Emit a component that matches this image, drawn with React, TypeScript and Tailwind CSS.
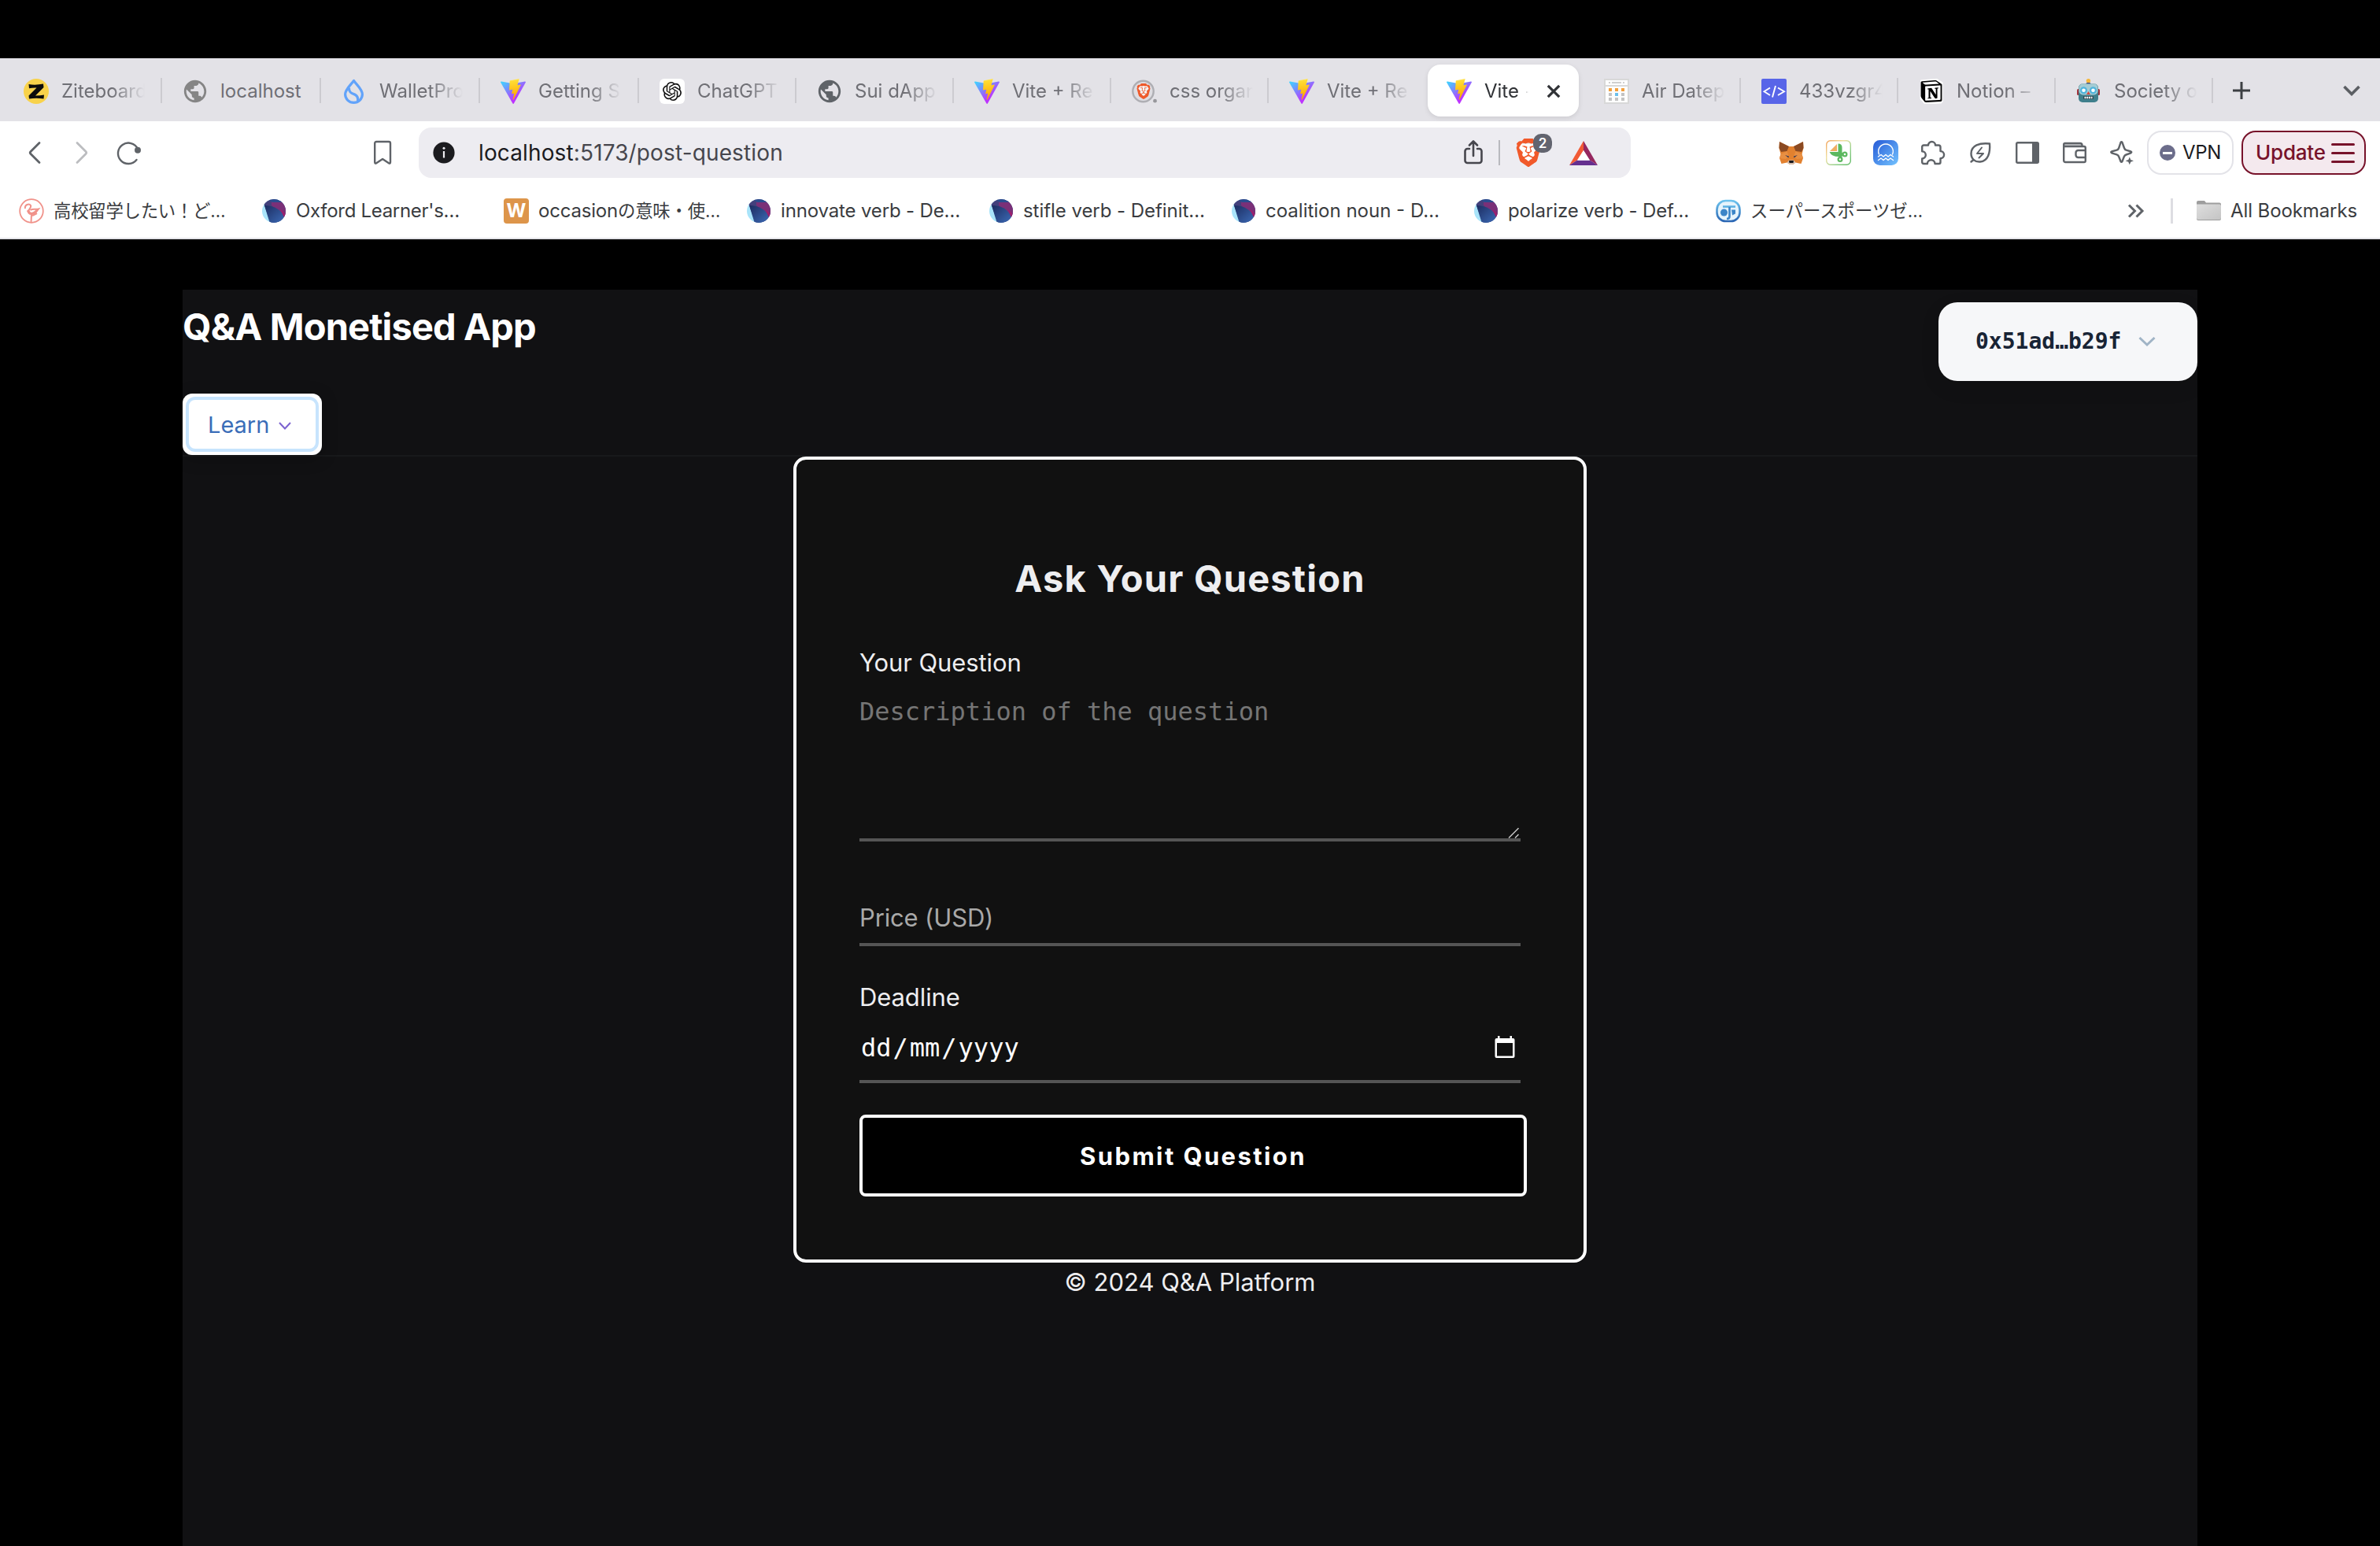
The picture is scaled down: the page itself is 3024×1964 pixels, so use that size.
import type { ReactNode } from "react";
import { SiBrave, SiNotion, SiOpenai } from "react-icons/si";
import { MdPublic } from "react-icons/md";

const Vite = () => (
  <svg viewBox="0 0 256 257" className="size-8">
    <defs>
      <linearGradient id="va" x1="-.8%" x2="57.6%" y1="7.6%" y2="78.4%">
        <stop offset="0%" stopColor="#41D1FF" />
        <stop offset="100%" stopColor="#BD34FE" />
      </linearGradient>
      <linearGradient id="vb" x1="43.4%" x2="50.3%" y1="2.2%" y2="89%">
        <stop offset="0%" stopColor="#FFEA83" />
        <stop offset="8.3%" stopColor="#FFDD35" />
        <stop offset="100%" stopColor="#FFA800" />
      </linearGradient>
    </defs>
    <path
      fill="url(#va)"
      d="M255.153 37.938L134.897 252.976c-2.483 4.44-8.862 4.466-11.382.048L.875 37.958c-2.746-4.814 1.371-10.646 6.827-9.67l120.385 21.517a6.537 6.537 0 0 0 2.322-.004l117.867-21.483c5.438-.991 9.574 4.796 6.877 9.62Z"
    />
    <path
      fill="url(#vb)"
      d="M185.432.063L96.44 17.501a3.268 3.268 0 0 0-2.634 3.014l-5.474 92.456a3.268 3.268 0 0 0 3.997 3.378l24.777-5.718c2.318-.535 4.413 1.507 3.936 3.838l-7.361 36.047c-.495 2.426 1.782 4.5 4.151 3.78l15.304-4.649c2.372-.72 4.652 1.36 4.15 3.788l-11.698 56.621c-.732 3.542 3.979 5.473 5.943 2.437l1.313-2.028l72.516-144.72c1.215-2.423-.88-5.186-3.54-4.672l-25.505 4.922c-2.396.462-4.435-1.77-3.759-4.114l16.646-57.705c.677-2.35-1.37-4.583-3.769-4.113Z"
    />
  </svg>
);

const Zite = () => (
  <svg viewBox="0 0 32 32" className="size-8">
    <circle cx="16" cy="16" r="16" fill="#f8d24b" />
    <path d="M6.5 7 Q15 8.5 25 6.5 L25.5 11 L15 21.5 Q21 21.5 26 20.5 L25.5 25.5 Q16 24 7 25.5 L6.5 21.5 L16.5 11.5 Q11 11.3 7 12.2 Z" fill="#0c0c0c" />
  </svg>
);

const Sui = () => (
  <svg viewBox="0 0 32 32" className="size-8" fill="none" stroke="#62a3fa" strokeWidth="3.2" strokeLinejoin="round">
    <path d="M15.500 2.500 C12.500 7 4.600 13.500 4.600 19.800 a10.900 10.600 0 0 0 21.800 0 C26.400 13.500 18.500 7 15.500 2.500 Z" />
    <path d="M9.500 11.500 C9 18 13.500 18.500 17.500 20.500 C21.500 22.700 21 26 20.500 29" />
  </svg>
);

const ChatGpt = () => (
  <span className="flex size-8 items-center justify-center rounded-md bg-white">
    <SiOpenai size={24} color="#111" />
  </span>
);

const Globe = ({ light }: { light?: boolean }) => (
  <span className="flex size-8 items-center justify-center">
    <MdPublic size={34} color={light ? "#858585" : "#5f6368"} className="shrink-0" />
  </span>
);

const BraveSearch = () => (
  <span className="relative flex size-8 items-center justify-center">
    <svg viewBox="0 0 32 32" className="absolute inset-0 size-8">
      <circle cx="14.500" cy="16" r="13.200" fill="#dedde2" stroke="#aeaeb3" strokeWidth="2.400" />
      <circle cx="29.500" cy="28.200" r="2.400" fill="#97979c" />
      <path d="M8 8 h13 l1 6 -2 8 -5.500 4 -5.500 -4 -2 -8 Z" fill="#f4f4f6" />
    </svg>
    <SiBrave size={20} color="#ee5a2b" className="relative -left-[1.5px]" />
  </span>
);

const Calendar = () => (
  <svg viewBox="0 0 32 32" className="size-8">
    <rect x="1" y="1" width="30" height="30" fill="#fdfdfd" stroke="#d8d8d8" strokeWidth="2" />
    <path d="M1 9 H31" stroke="#d8d8d8" strokeWidth="2" />
    <path d="M6 5 h2 M10 5 h12 M24 5 h2" stroke="#d0d0d0" strokeWidth="2" />
    <path d="M6 14 h4 M14 14 h4 M22 14 h4" stroke="#f4a03c" strokeWidth="4" />
    <path d="M6 20 h4 M22 20 h4 M6 26 h4 M14 26 h4 M22 26 h4" stroke="#c3c3c3" strokeWidth="4" />
    <path d="M14 20 h4" stroke="#6cc0ec" strokeWidth="4" />
  </svg>
);

const Code = () => (
  <svg viewBox="0 0 32 32" className="size-8">
    <rect width="32" height="32" rx="2" fill="#5865e8" />
    <path d="M11 11.500 L3.500 16.300 L11 21 M21 11.500 L29 16.300 L21 21 M18 9 L14 23.500" fill="none" stroke="#fff" strokeWidth="1.900" />
  </svg>
);

const Notion = () => (
  <span className="relative flex size-8 items-center justify-center">
    <svg viewBox="0 0 32 32" className="absolute inset-0 size-8">
      <path d="M3 2.500 L23 1 L29.500 5 V29 L28 30.500 L9 31.500 L7 30.500 L2.500 25 Z" fill="#fff" stroke="#fff" strokeWidth="2" strokeLinejoin="round" />
    </svg>
    <SiNotion size={28} color="#000" className="relative" />
  </span>
);

const Robot = () => (
  <svg viewBox="0 0 32 32" className="size-8">
    <circle cx="15.500" cy="2.800" r="2.700" fill="#f6b73c" />
    <rect x="12.500" y="5" width="6" height="3.500" rx="1.500" fill="#3e4a78" />
    <rect x="1" y="13" width="3.500" height="8" rx="1.500" fill="#a1343c" />
    <rect x="26.500" y="13" width="3.500" height="8" rx="1.500" fill="#a1343c" />
    <rect x="3" y="6.500" width="25" height="23.500" rx="5" fill="#3f7f8c" />
    <rect x="3.500" y="6.500" width="24" height="14" rx="5" fill="#a5ccd4" />
    <circle cx="9.500" cy="14.800" r="4.500" fill="#4fb4dc" />
    <circle cx="21.500" cy="14.800" r="4.500" fill="#4fb4dc" />
    <circle cx="9.500" cy="14.800" r="2.300" fill="#fff" />
    <circle cx="21.500" cy="14.800" r="2.300" fill="#fff" />
    <path d="M15.500 16 l2.500 4 h-5 Z" fill="#d8473d" />
    <rect x="9" y="22" width="13" height="4" rx="1" fill="#2b4650" />
    <path d="M10.500 24 h10" stroke="#fff" strokeWidth="2.500" strokeDasharray="2 0.800" />
  </svg>
);

const stroke = { fill: "none", stroke: "#5f6368", strokeWidth: 2.4, strokeLinecap: "round", strokeLinejoin: "round" } as const;

const Fox = () => (
  <svg viewBox="0 0 32 32" className="size-8">
    <path d="M1 2 L13 8 H19 L31 2 L31.500 10 L29.500 18 L31 23 L28.500 30 L21.500 28.500 L18 31 H14 L10.500 28.500 L3.500 30 L1 23 L2.500 18 L.5 10 Z" fill="#e2812f" />
    <path d="M1 2 L13 8 L10.500 14 L3 15 L.5 10 Z M31 2 L19 8 L21.500 14 L29 15 L31.500 10 Z" fill="#8b4a22" />
    <path d="M2.500 18 L10.500 14 L12.500 20 L9 24 L1 23 Z M29.500 18 L21.500 14 L19.500 20 L23 24 L31 23 Z" fill="#e88f42" />
    <path d="M8 19 l5 1.500 -.5 2 Z M24 19 l-5 1.500 .5 2 Z" fill="#3a3a55" />
    <path d="M10.500 28.500 L13 25.500 H19 L21.500 28.500 L18 31 H14 Z" fill="#d6c0b0" />
    <path d="M13 26 h6 l-.5 3 h-5 Z" fill="#17171b" />
  </svg>
);

const Boat = () => (
  <svg viewBox="0 0 32 32" className="size-8">
    <defs>
      <linearGradient id="bt" x1="0" y1="0" x2="1" y2="1">
        <stop offset="0%" stopColor="#f2a45c" />
        <stop offset="35%" stopColor="#f0dfa0" />
        <stop offset="70%" stopColor="#8fcf8a" />
        <stop offset="100%" stopColor="#5fb963" />
      </linearGradient>
    </defs>
    <rect x=".7" y=".7" width="30.600" height="30.600" rx="5" fill="#fff" stroke="url(#bt)" strokeWidth="1.400" />
    <path d="M14 5 V14 H5 Z" fill="#f0ad62" />
    <path d="M15.500 4.500 q5 0 5 5 V16 h3 v4 h-3 v3 h-4 v-2 Q7 21 4.500 15 H15.500 Z" fill="#5cb85f" />
    <circle cx="24" cy="18" r="2.400" fill="#fff" stroke="#5cb85f" strokeWidth="2.200" />
    <circle cx="18" cy="24.500" r="2.400" fill="#fff" stroke="#5cb85f" strokeWidth="2.200" />
  </svg>
);

const Wave = () => (
  <svg viewBox="0 0 32 32" className="size-8">
    <defs>
      <linearGradient id="wv" x1="0" y1="0" x2="1" y2="1">
        <stop offset="0%" stopColor="#2559d6" />
        <stop offset="100%" stopColor="#74c4ff" />
      </linearGradient>
    </defs>
    <rect width="32" height="32" rx="8.500" fill="url(#wv)" />
    <g fill="none" stroke="#fff" strokeWidth="1.400" strokeLinejoin="round" strokeLinecap="round">
      <path d="M7.500 18 a9.300 9.300 0 1 1 17 0" />
      <path d="M6.500 21 l3.500 -2.500 3 2.500 3 -2.500 3 2.500 3 -2.500 3.500 2.500" />
      <path d="M6.500 25.500 l3.500 -2.500 3 2.500 3 -2.500 3 2.500 3 -2.500 3.500 2.500" />
    </g>
  </svg>
);

const Puzzle = () => (
  <svg viewBox="0 0 32 32" className="size-8" {...stroke}>
    <path d="M2.200 8.500 a2 2 0 0 1 2 -2 H10 a4.300 4.300 0 0 1 9 0 H23 a2.500 2.500 0 0 1 2.500 2.500 V14 a4.600 4.600 0 0 1 0 9.200 V28 a2 2 0 0 1 -2 2 H18.500 a4.800 4.800 0 0 0 -9.600 0 H4.200 a2 2 0 0 1 -2 -2 V23.500 a4.600 4.600 0 0 0 0 -9.200 Z" />
  </svg>
);

const Leaf = () => (
  <svg viewBox="0 0 32 32" className="size-8" {...stroke}>
    <path d="M28 4.500 C15 3 4.500 7 4.500 17 C4.500 24 9.500 28 16 27.500 C26 26.500 29 16 28 4.500 Z" />
    <path d="M7.500 25 L4.500 27.500" />
    <path d="M18 9.500 L12 17 H20 L14.500 22.500" strokeWidth="2" />
  </svg>
);

const Sidebar = () => (
  <svg viewBox="0 0 32 32" className="size-8">
    <rect x="2.200" y="3.200" width="27.600" height="25.600" rx="1.500" fill="none" stroke="#5f6368" strokeWidth="2.400" />
    <rect x="22" y="3" width="8" height="26" fill="#5f6368" />
  </svg>
);

const Wallet = () => (
  <svg viewBox="0 0 32 32" className="size-8" {...stroke}>
    <path d="M3 4.500 H23 a3 3 0 0 1 3 3 V8 H3 Z" fill="#c9cacc" stroke="none" />
    <path d="M2.200 8 V26 a2 2 0 0 0 2 2 H28 a1.800 1.800 0 0 0 1.800 -1.800 V10 a2 2 0 0 0 -2 -2 H2.200 V5.500 a1.500 1.500 0 0 1 1.500 -1.500 H23 a2.500 2.500 0 0 1 2.500 2.500 V8" />
    <path d="M29.500 13 H20.500 a3 3 0 0 0 -3 3 V19 a3 3 0 0 0 3 3 H29.500" />
  </svg>
);

const Sparkle = () => (
  <svg viewBox="0 0 32 32" className="size-8" {...stroke}>
    <path d="M14.500 3 q1 -1.500 2 0 L19 10 q.7 2 2.500 2.700 L27.500 14.500 q1.500 .8 0 1.800 L21.500 18.500 q-2 .7 -2.700 2.500 L16.500 27 q-1 1.500 -2 0 L12.200 21 q-.7 -2 -2.700 -2.700 L3 16.300 q-1.500 -1 0 -1.800 L9.500 12.700 q2 -.7 2.700 -2.700 Z" />
    <path d="M25.800 21.500 l1.500 3.400 3.700 1.400 -3.700 1.400 -1.500 3.500 -1.500 -3.500 -3.700 -1.400 3.700 -1.400 Z" fill="#5f6368" stroke="none" />
  </svg>
);

const Flamingo = () => (
  <svg viewBox="0 0 32 32" className="size-8" fill="none" stroke="#f0928a" strokeWidth="2">
    <circle cx="16" cy="16" r="14.800" strokeWidth="1.800" />
    <path d="M8 13 C7 8 13 6 15 9 C16.500 12 11 14 12 18 C14 21 20 20 23 16 L25 13.500 C21 14.500 18 12.500 14.500 15" />
    <path d="M11 15 L14 19 C17 20 20 19 23 15" strokeWidth="3" />
    <path d="M16 20 L15.500 31 M17 22 L23 19" />
  </svg>
);

const Oxford = () => (
  <svg viewBox="0 0 32 32" className="size-8">
    <defs>
      <clipPath id="ox">
        <circle cx="16" cy="16" r="15" />
      </clipPath>
      <linearGradient id="oxb" x1="0" y1="0" x2="1" y2="1">
        <stop offset="0%" stopColor="#1c2c60" />
        <stop offset="100%" stopColor="#3d6cb8" />
      </linearGradient>
    </defs>
    <g clipPath="url(#ox)">
      <rect width="32" height="32" fill="#a9e4fa" />
      <path d="M0 0 H32 V32 H12 L4 9 Z" fill="#43407c" />
      <path d="M13 4 L32 2 V26 L13 9 Z" fill="#7a3078" />
      <path d="M10 2 L22 0 L30 8 L26 5 L14 5 Z" fill="#2a4d90" />
      <path d="M4 9 C16 9 26 14 29 25 L24 32 H11 Z" fill="url(#oxb)" />
      <path d="M24 13 L31 20 L29 24 Z" fill="#9c1f6d" />
    </g>
  </svg>
);

const Weblio = () => (
  <span className="flex size-8 items-center justify-center rounded-[4px] bg-[#dd954a] font-[Inter] text-[24px] leading-none font-bold text-white">W</span>
);

const Sports = () => (
  <svg viewBox="0 0 32 32" className="size-8">
    <defs>
      <linearGradient id="sp" x1="0" y1="0" x2="0" y2="1">
        <stop offset="0%" stopColor="#6cc3ee" />
        <stop offset="100%" stopColor="#2a66b4" />
      </linearGradient>
    </defs>
    <rect x="1.500" y="3" width="29" height="26" rx="11" fill="#e6f4fc" stroke="url(#sp)" strokeWidth="2.600" />
    <path d="M9 10.500 H25" fill="none" stroke="#5db2e2" strokeWidth="2.600" />
    <path d="M17.500 11 V23 q0 3 -3.500 3" fill="none" stroke="#3b85c8" strokeWidth="2.600" />
    <circle cx="10.500" cy="18" r="4.500" fill="#3b85c8" />
    <path d="M20 14.500 h5 v5 l-4 2 Z" fill="#3b85c8" />
  </svg>
);

type TabData = { icon: ReactNode; title: string; active?: boolean; noSep?: boolean; wide?: boolean; plain?: boolean };

const tabs: TabData[] = [
  { icon: <Zite />, title: "Ziteboard", wide: true },
  { icon: <Globe light />, title: "localhost", wide: true, plain: true },
  { icon: <Sui />, title: "WalletPro", wide: true },
  { icon: <Vite />, title: "Getting S", wide: true },
  { icon: <ChatGpt />, title: "ChatGPT" },
  { icon: <Globe />, title: "Sui dApp" },
  { icon: <Vite />, title: "Vite + Re" },
  { icon: <BraveSearch />, title: "css organ" },
  { icon: <Vite />, title: "Vite + Re", noSep: true },
  { icon: <Vite />, title: "Vite +", active: true },
  { icon: <Calendar />, title: "Air Datep" },
  { icon: <Code />, title: "433vzgr4" },
  { icon: <Notion />, title: "Notion –" },
  { icon: <Robot />, title: "Society o" },
];

const Tab = ({ t }: { t: TabData }) => (
  <div className={t.wide ? "flex h-full w-[202px] shrink-0 items-center" : "flex h-full w-[200px] shrink-0 items-center"}>
    {t.active ? (
      <div className="ml-0.5 flex h-[66px] w-48 items-center rounded-2xl bg-white pl-6 shadow-[0_2px_6px_rgba(0,0,0,0.1)]">
        <span className="mt-0.5 shrink-0">{t.icon}</span>
        <span className="mt-0.5 ml-4 w-14 overflow-hidden leading-8 whitespace-nowrap text-[#303236] [mask-image:linear-gradient(to_right,black_78%,transparent)]">{t.title}</span>
        <svg viewBox="0 0 16 16" className="mt-0.5 ml-6 size-4 overflow-visible" stroke="#303236" strokeWidth="3.200">
          <path d="M.8 .8 L15.200 15.200 M15.200 .8 L.8 15.200" />
        </svg>
      </div>
    ) : (
      <>
        <span className="mt-0.5 ml-[26px] shrink-0">{t.icon}</span>
        <span
          className={
            t.plain
              ? "mt-0.5 ml-4 w-[108px] leading-8 whitespace-nowrap"
              : "mt-0.5 ml-4 w-[106px] overflow-hidden leading-8 whitespace-nowrap [mask-image:linear-gradient(to_right,black_60%,transparent)]"
          }
        >
          {t.title}
        </span>
        {!t.noSep && <span className="ml-auto h-8 w-0.5 bg-[#cccbd0]" />}
      </>
    )}
  </div>
);

const bookmarks: { icon: ReactNode; label: ReactNode }[] = [
  { icon: <Flamingo />, label: <span className="text-[22.4px] tracking-[-0.25px]">高校留学したい！ど…</span> },
  { icon: <Oxford />, label: <span className="tracking-[-0.3px]">Oxford Learner's…</span> },
  { icon: <Weblio />, label: <span className="tracking-[-0.2px]">occasion<span className="text-[22.4px]">の意味・使…</span></span> },
  { icon: <Oxford />, label: <span className="tracking-[-0.15px]">innovate verb - De…</span> },
  { icon: <Oxford />, label: <span className="tracking-[-0.05px]">stifle verb - Definit…</span> },
  { icon: <Oxford />, label: "coalition noun - D…" },
  { icon: <Oxford />, label: <span className="tracking-[-0.12px]">polarize verb - Def…</span> },
  { icon: <Sports />, label: <span className="text-[22.4px]">スーパースポーツゼ…</span> },
];

const Toolbar = () => (
  <div className="flex h-20 items-center pl-7">
    <svg viewBox="0 0 32 32" className="size-8" {...stroke} strokeWidth={2.8}>
      <path d="M22 3.500 L11 14.500 q-1.500 1.500 0 3 L22 28.500" />
    </svg>
    <svg viewBox="0 0 32 32" className="ml-7 size-8" {...stroke} stroke="#bcbdc0" strokeWidth={2.8}>
      <path d="M10 3.500 L21 14.500 q1.500 1.500 0 3 L10 28.500" />
    </svg>
    <svg viewBox="0 0 32 32" className="ml-7 size-8" {...stroke}>
      <path d="M27 11 A13.200 13.200 0 1 0 25.500 25" />
      <circle cx="27" cy="12.800" r="4" fill="#5f6368" stroke="none" />
    </svg>
    <svg viewBox="0 0 32 32" className="ml-[290px] size-8" {...stroke}>
      <path d="M6.200 4 a2 2 0 0 1 2 -2 H24 a2 2 0 0 1 2 2 V28 q0 2.500 -2 1.200 L16.100 24 L8.200 29.200 q-2 1.300 -2 -1.200 Z" />
    </svg>
    <div className="ml-[30px] flex h-16 w-[1540px] items-center rounded-2xl bg-[#edecf1] pl-[18px] text-[28px]">
      <svg viewBox="0 0 28 28" className="size-7">
        <circle cx="14" cy="14" r="13.600" fill="#1b1b1f" />
        <circle cx="14" cy="8.300" r="1.500" fill="#edecf1" />
        <path d="M14 12 V20.500" stroke="#edecf1" strokeWidth="2.200" />
      </svg>
      <span className="ml-[30px] tracking-[0.13px] whitespace-nowrap text-[#46464d]">
        <span className="text-[#1b1b1f]">localhost</span>:5173/post-question
      </span>
      <svg viewBox="0 0 32 32" className="ml-auto size-8" {...stroke} stroke="#46464d" strokeWidth={2.6}>
        <path d="M11 11 H8.500 a3 3 0 0 0 -3 3 V26 a3 3 0 0 0 3 3 H23.500 a3 3 0 0 0 3 -3 V14 a3 3 0 0 0 -3 -3 H21 M16 20 V2 M11 6.500 L16 1.500 L21 6.500" />
      </svg>
      <span className="ml-4 h-8 w-0.5 bg-[#b9b9be]" />
      <span className="relative ml-[18px] flex h-9 w-10 items-center">
        <svg viewBox="0 0 36 36" className="absolute inset-0 size-9">
          <path d="M8 7 H27 L29 16 L25 27 L18 32 L11 27 L7 16 Z" fill="#fff" />
        </svg>
        <SiBrave size={36} color="#f1592a" className="relative shrink-0" />
        <span className="absolute -top-1.5 left-6 flex h-6 w-6 items-center justify-center rounded-[10px] bg-[#62646f] text-[17px] leading-none font-semibold text-white">2</span>
      </span>
      <svg viewBox="0 0 36 31" className="mr-[42px] ml-[30px] h-[31px] w-9">
        <path d="M18 0 L0 31 L10 24.500 L18 12 Z" fill="#f15a35" />
        <path d="M18 0 L36 31 L26 24.500 L18 12 Z" fill="#95275f" />
        <path d="M0 31 L10 24.500 H26 L36 31 Z" fill="#652f8f" />
        <path d="M18 12 L10 24.800 H26 Z" fill="#fff" />
      </svg>
    </div>
    <div className="ml-[188px] flex gap-7">
      <Fox />
      <Boat />
      <Wave />
      <Puzzle />
      <Leaf />
      <Sidebar />
      <Wallet />
      <Sparkle />
    </div>
    <div className="ml-4 flex h-14 w-[110px] items-center rounded-[18px] border-2 border-[#e3e3e8] pl-3.5 text-[24px] text-[#1b1b22]">
      <span className="flex size-5 items-center justify-center rounded-full bg-[#6c6d8b]">
        <span className="h-[3px] w-3 bg-white" />
      </span>
      <span className="ml-[9px] tracking-[-0.3px]">VPN</span>
    </div>
    <div className="ml-2.5 flex h-14 w-[158px] items-center rounded-[18px] border-2 border-[#77122a] bg-[#f4e9ee] pl-4 text-[26px] font-medium text-[#77122a]">
      <span className="tracking-[-0.2px]">Update</span>
      <span className="mr-3 ml-auto flex w-[30px] flex-col gap-2">
        <span className="h-[3px] rounded bg-[#77122a]" />
        <span className="h-[3px] rounded bg-[#77122a]" />
        <span className="h-[3px] rounded bg-[#77122a]" />
      </span>
    </div>
  </div>
);

const Bookmarks = () => (
  <div className="flex h-[70px] items-center border-b-2 border-[#e3e3e8] pl-6 whitespace-nowrap text-[#3a3c40]">
    {bookmarks.map((b, i) => (
      <div key={i} className="flex w-[308px] shrink-0 items-center gap-3">
        {b.icon}
        <span>{b.label}</span>
      </div>
    ))}
    <svg viewBox="0 0 24 20" className="ml-[214px] h-5 w-6" fill="none" stroke="#5f6368" strokeWidth="3">
      <path d="M3 2.500 L10.500 10 L3 17.500 M12.500 2.500 L20 10 L12.500 17.500" />
    </svg>
    <span className="ml-8 h-8 w-[3px] bg-[#dddde2]" />
    <svg viewBox="0 0 32 32" className="ml-[29px] size-8">
      <defs>
        <linearGradient id="fo" x1="0" y1="0" x2="1" y2="1">
          <stop offset="0%" stopColor="#dedede" />
          <stop offset="100%" stopColor="#c4c4c4" />
        </linearGradient>
      </defs>
      <path d="M1 5 a2 2 0 0 1 2 -2 H11 l2 2.500 H30 a2 2 0 0 1 2 2 V26 a2 2 0 0 1 -2 2 H3 a2 2 0 0 1 -2 -2 Z" fill="#9d9d9d" />
      <path d="M1 7.500 H30 a2 2 0 0 1 2 2 V25 a2 2 0 0 1 -2 2 H3 a2 2 0 0 1 -2 -2 Z" fill="url(#fo)" />
    </svg>
    <span className="ml-3 tracking-[-0.1px]">All Bookmarks</span>
  </div>
);

export default function App() {
  return (
    <div className="h-[1964px] w-[3024px] overflow-hidden bg-black font-[Inter,'Noto_Sans_CJK_JP',sans-serif] text-[24px] leading-none">
      <div className="h-[74px]" />
      <div className="flex h-20 items-center bg-[#e3e2e7] pt-0.5 pl-1 text-[#6f6f75]">
        {tabs.map((t, i) => (
          <Tab key={i} t={t} />
        ))}
        <svg viewBox="0 0 22 22" className="ml-[25px] size-[22px]" stroke="#3c3f43" strokeWidth="3">
          <path d="M11 0 V22 M0 11 H22" />
        </svg>
        <svg viewBox="0 0 22 14" className="mr-[25px] ml-auto h-3.5 w-[22px]" fill="none" stroke="#5b5e63" strokeWidth="3.600">
          <path d="M1.500 2 L11 11.500 L20.500 2" />
        </svg>
      </div>
      <div className="bg-white">
        <Toolbar />
        <Bookmarks />
      </div>

      <div className="mx-auto mt-16 h-[1596px] w-[2560px] bg-[#111113] pt-4 text-[31px] text-[#eeeef0]">
        <header className="border-b-2 border-[#18191b]">
          <div className="flex h-[100px] items-start justify-between">
            <h1 className="text-[47px] leading-[62px] font-bold tracking-[-0.87px] whitespace-nowrap text-white">Q&amp;A Monetised App</h1>
            <button className="flex h-[100px] w-[329px] items-center rounded-3xl bg-[#f6f7f9] pl-[47px] font-['DejaVu_Sans_Mono',monospace] text-[28px] font-bold text-[#182435] shadow-[0_8px_24px_rgba(0,0,0,0.1)]">
              <span>0x51ad…b29f</span>
              <svg viewBox="0 0 22 14" className="ml-[22px] h-3.5 w-[22px]" fill="none" stroke="#a0b4c6" strokeWidth="3">
                <path d="M1.500 2 L11 11 L20.500 2" />
              </svg>
            </button>
          </div>
          <button className="mt-4 flex h-[78px] w-[177px] items-center rounded-xl bg-white p-1 shadow-[0_4px_20px_rgba(0,0,0,0.25)]">
            <span className="flex h-[70px] w-[169px] items-center rounded-xl border-4 border-[#c7e4fd] pl-6 text-[29px] text-[#3a6db8]">
              <span>Learn</span>
              <svg viewBox="0 0 16 10" className="mt-1 ml-3 h-2.5 w-4" fill="none" stroke="#7b62cf" strokeWidth="2">
                <path d="M1 1 L8 8.500 L15 1" />
              </svg>
            </span>
          </button>
        </header>

        <main className="mx-auto h-[1024px] w-[1008px] rounded-2xl border-4 border-white bg-[#111111] px-20 pt-[118px]">
          <h2 className="text-center text-[47px] leading-[65px] font-bold tracking-[1.2px]">Ask Your Question</h2>
          <div className="mt-[54px] mb-[-2px] leading-[42px] tracking-[-0.1px]">Your Question</div>
          <div className="relative h-[208px] border-b-4 border-[#555] pt-[23px] font-['DejaVu_Sans_Mono',monospace] text-[32px] leading-10 text-[#757575]">
            Description of the question
            <svg viewBox="0 0 14 14" className="absolute right-0.5 bottom-0 size-3.5" stroke="#c8c8c8" strokeWidth="1.500">
              <path d="M1 13.500 L13.500 1 M9 13.500 L13.500 9" />
            </svg>
          </div>
          <div className="h-[133px] border-b-4 border-[#555] pt-[76px] leading-[42px] tracking-[-0.15px] text-[#a9a9a9]">Price (USD)</div>
          <div className="mt-11 mb-[-2px] leading-[42px] tracking-[-0.1px]">Deadline</div>
          <div className="flex h-[90px] items-start border-b-4 border-[#555] pt-[25px] pl-0.5 font-['DejaVu_Sans_Mono',monospace] text-[32px] leading-10 text-white">
            <span className="flex gap-0.5">
              <span>dd</span>
              <span>/</span>
              <span>mm</span>
              <span>/</span>
              <span>yyyy</span>
            </span>
            <svg viewBox="0 0 26 28" className="mt-[5px] mr-[7px] ml-auto h-7 w-[26px]">
              <path d="M2.500 3 H23.500 a2 2 0 0 1 2 2 V26 a2 2 0 0 1 -2 2 H2.500 a2 2 0 0 1 -2 -2 V5 a2 2 0 0 1 2 -2 Z M3 9 V25.500 H23 V9 Z M4 0 h2.500 v3 H4 Z M19.500 0 H22 v3 H19.500 Z" fill="#fff" fillRule="evenodd" />
            </svg>
          </div>
          <button className="mt-10 flex h-[104px] w-[848px] items-center justify-center rounded-lg border-4 border-white bg-black pt-px font-bold tracking-[2.4px] text-white">
            Submit Question
          </button>
        </main>
        <footer className="mt-1 text-center leading-[42px]">© 2024 Q&amp;A Platform</footer>
      </div>
    </div>
  );
}
